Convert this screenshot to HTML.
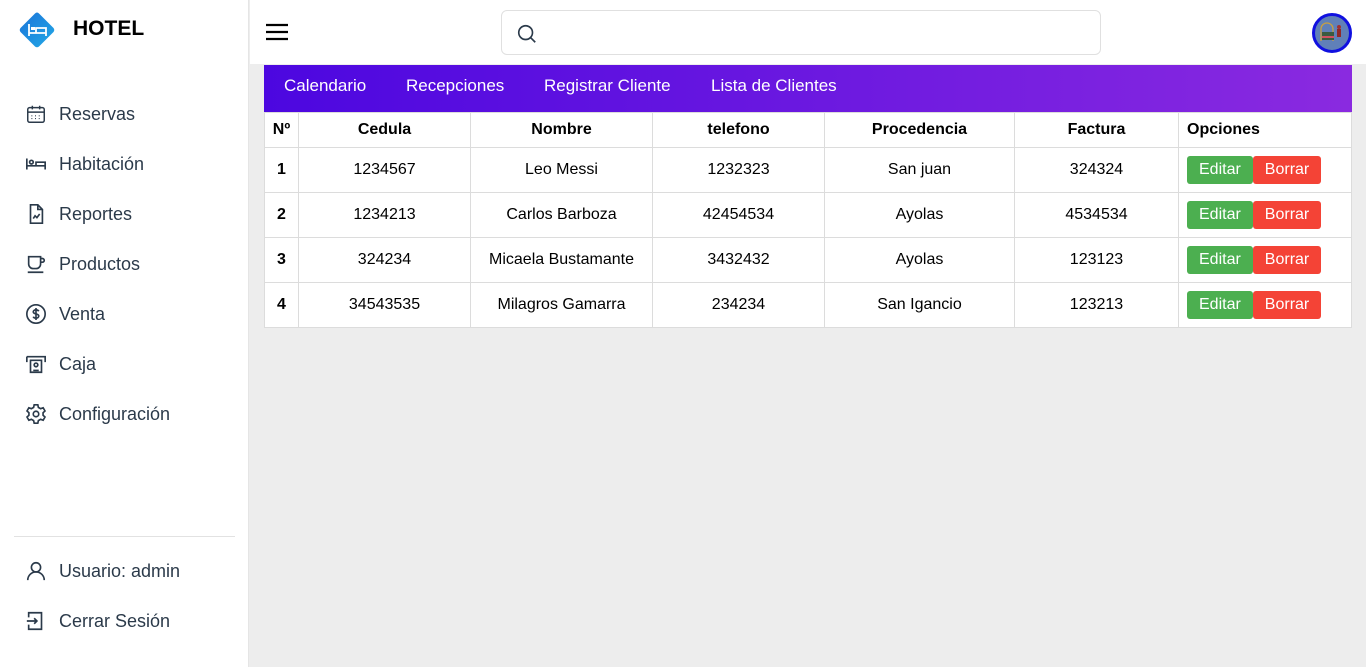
<!DOCTYPE html>
<html><head><meta charset="utf-8"><style>
*{box-sizing:border-box;margin:0;padding:0}
body{width:1366px;height:667px;overflow:hidden;font-family:"Liberation Sans",sans-serif;background:#ededed;position:relative}
.side{position:absolute;left:0;top:0;width:249px;height:667px;background:#fff;border-right:1px solid #e5e5e5}
.logo{position:absolute;left:18px;top:11px}
.brand{position:absolute;left:73px;top:17px;font-size:21px;font-weight:bold;color:#000}
.nav{position:absolute;left:25px;color:#2b3a4a;font-size:18px}
.nav svg{position:absolute;left:0;top:-1px}
.nav span{position:absolute;left:34px;top:0;white-space:nowrap}
.hr{position:absolute;left:14px;top:536px;width:221px;height:1px;background:#e2e2e2}
.top{position:absolute;left:250px;top:0;width:1116px;height:64px;background:#fff}
.search{position:absolute;left:501px;top:10px;width:600px;height:45px;border:1px solid #e0e0e0;border-radius:6px;background:#fff}
.bar{position:absolute;left:264px;top:65px;width:1088px;height:47px;background:linear-gradient(90deg,#4c07e0,#8a2ae0)}
.bar span{position:absolute;top:11px;color:#fff;font-size:17px}
table{position:absolute;left:264px;top:112px;width:1088px;border-collapse:collapse;background:#fff;font-size:16px}
td,th{border:1px solid #dcdcdc;text-align:center;height:45px;color:#000}
th{height:35px;font-weight:bold}
.b{display:inline-block;color:#fff;height:28px;line-height:28px;padding:0 12px;border-radius:3px;font-size:16px}
</style></head><body>
<div class="side">
<svg class="logo" width="38" height="38" viewBox="0 0 38 38"><defs><linearGradient id="g" x1="0" y1="0" x2="1" y2="1"><stop offset="0" stop-color="#1a73d9"/><stop offset="1" stop-color="#23a9e6"/></linearGradient></defs><path d="M19 1.5Q20 1.5 21 2.5L35.5 17Q37 19 35.5 21L21 35.5Q19 37 17 35.5L2.5 21Q1 19 2.5 17L17 2.5Q18 1.5 19 1.5Z" fill="url(#g)"/><path d="M11 25V13M11 22h17v3M28 22v-5h-10v5" stroke="#fff" stroke-width="1.8" fill="none"/><rect x="13" y="16" width="4" height="3" fill="#fff"/></svg>
<div class="brand">HOTEL</div>
<div class="nav" style="top:104px"><svg width="22" height="22" viewBox="0 0 24 24" fill="none" stroke="#2b3a4a" stroke-width="1.6"><rect x="3" y="5" width="18" height="16" rx="2"/><path d="M3 10h18M8 3v4M16 3v4"/><path d="M7 14h1M11 14h1M15 14h1M7 17h1M11 17h1M15 17h1" stroke-width="1.2"/></svg><span>Reservas</span></div>
<div class="nav" style="top:154px"><svg width="22" height="22" viewBox="0 0 24 24" fill="none" stroke="#2b3a4a" stroke-width="1.8"><path d="M2 6v12M2 14h20v4M22 14v-4h-10v4"/><circle cx="7" cy="10" r="2"/></svg><span>Habitación</span></div>
<div class="nav" style="top:204px"><svg width="22" height="22" viewBox="0 0 24 24" fill="none" stroke="#2b3a4a" stroke-width="1.8"><path d="M6 2h8l5 5v15H6z"/><path d="M14 2v5h5M9 17l2-3 2 2 3-4"/></svg><span>Reportes</span></div>
<div class="nav" style="top:254px"><svg width="22" height="22" viewBox="0 0 24 24" fill="none" stroke="#2b3a4a" stroke-width="1.8"><path d="M4 4h13v8a5 5 0 0 1-5 5H9a5 5 0 0 1-5-5z"/><path d="M17 6h2a2 2 0 0 1 0 4h-2M3 21h17"/></svg><span>Productos</span></div>
<div class="nav" style="top:304px"><svg width="22" height="22" viewBox="0 0 24 24" fill="none" stroke="#2b3a4a" stroke-width="1.8"><circle cx="12" cy="12" r="10"/><path d="M15 9c-.5-1-1.6-1.5-3-1.5-1.7 0-3 .8-3 2.2 0 3 6 1.5 6 4.5 0 1.4-1.3 2.3-3 2.3-1.5 0-2.6-.6-3-1.6M12 5.5v13"/></svg><span>Venta</span></div>
<div class="nav" style="top:354px"><svg width="22" height="22" viewBox="0 0 24 24" fill="none" stroke="#2b3a4a" stroke-width="1.8"><path d="M2 4h20v6M2 4v6M6 8h12v13H6z"/><circle cx="12" cy="13" r="2"/><path d="M9 19h6"/></svg><span>Caja</span></div>
<div class="nav" style="top:404px"><svg width="22" height="22" viewBox="0 0 24 24" fill="none" stroke="#2b3a4a" stroke-width="1.8"><path d="M10 2h4l.6 2.8 2.5 1.4 2.7-1 2 3.5-2.1 1.9v2.8l2.1 1.9-2 3.5-2.7-1-2.5 1.4L14 22h-4l-.6-2.8-2.5-1.4-2.7 1-2-3.5 2.1-1.9v-2.8L2.2 8.7l2-3.5 2.7 1 2.5-1.4z"/><circle cx="12" cy="12" r="3"/></svg><span>Configuración</span></div>
<div class="hr"></div>
<div class="nav" style="top:561px"><svg width="22" height="22" viewBox="0 0 24 24" fill="none" stroke="#2b3a4a" stroke-width="1.8"><circle cx="12" cy="8" r="5"/><path d="M3 22a9 9 0 0 1 18 0"/></svg><span>Usuario: admin</span></div>
<div class="nav" style="top:611px"><svg width="22" height="22" viewBox="0 0 24 24" fill="none" stroke="#2b3a4a" stroke-width="1.8"><path d="M4 8V3h14v18H4v-5M2 12h11M10 9l3 3-3 3"/></svg><span>Cerrar Sesión</span></div>
</div>
<div class="top"></div>
<svg style="position:absolute;left:265px;top:22px" width="24" height="20" viewBox="0 0 24 20"><path d="M1 3h22M1 10h22M1 17h22" stroke="#000" stroke-width="2.2"/></svg>
<div class="search"><svg style="position:absolute;left:14px;top:12px" width="22" height="22" viewBox="0 0 24 24" fill="none" stroke="#2b3a4a" stroke-width="1.8"><circle cx="10.5" cy="10.5" r="7.5"/><path d="M16 16l5 5"/></svg></div>
<svg style="position:absolute;left:1312px;top:13px" width="40" height="40" viewBox="0 0 40 40"><circle cx="20" cy="20" r="18.5" fill="#6080b8" stroke="#1010e0" stroke-width="3"/><path d="M9 28V16a6 6 0 0 1 12 0v12" stroke="#c9a040" fill="none" stroke-width="1.3"/><rect x="10" y="19" width="12" height="8" fill="#3a5a40"/><rect x="10" y="23" width="12" height="2" fill="#d05060"/><circle cx="27" cy="14" r="2" fill="#a03030"/><rect x="25" y="16" width="4" height="8" fill="#902828"/></svg>
<div class="bar"><span style="left:20px">Calendario</span><span style="left:142px">Recepciones</span><span style="left:280px">Registrar Cliente</span><span style="left:447px">Lista de Clientes</span></div>
<table>
<tr><th style="width:34px">Nº</th><th style="width:172px">Cedula</th><th style="width:182px">Nombre</th><th style="width:172px">telefono</th><th style="width:190px">Procedencia</th><th style="width:164px">Factura</th><th style="text-align:left;padding-left:8px">Opciones</th></tr>
<tr><td><b>1</b></td><td>1234567</td><td>Leo Messi</td><td>1232323</td><td>San juan</td><td>324324</td><td style="text-align:left;padding-left:8px"><span class="b" style="background:#4caf50">Editar</span><span class="b" style="background:#f44336">Borrar</span></td></tr>
<tr><td><b>2</b></td><td>1234213</td><td>Carlos Barboza</td><td>42454534</td><td>Ayolas</td><td>4534534</td><td style="text-align:left;padding-left:8px"><span class="b" style="background:#4caf50">Editar</span><span class="b" style="background:#f44336">Borrar</span></td></tr>
<tr><td><b>3</b></td><td>324234</td><td>Micaela Bustamante</td><td>3432432</td><td>Ayolas</td><td>123123</td><td style="text-align:left;padding-left:8px"><span class="b" style="background:#4caf50">Editar</span><span class="b" style="background:#f44336">Borrar</span></td></tr>
<tr><td><b>4</b></td><td>34543535</td><td>Milagros Gamarra</td><td>234234</td><td>San Igancio</td><td>123213</td><td style="text-align:left;padding-left:8px"><span class="b" style="background:#4caf50">Editar</span><span class="b" style="background:#f44336">Borrar</span></td></tr>
</table>
</body></html>
